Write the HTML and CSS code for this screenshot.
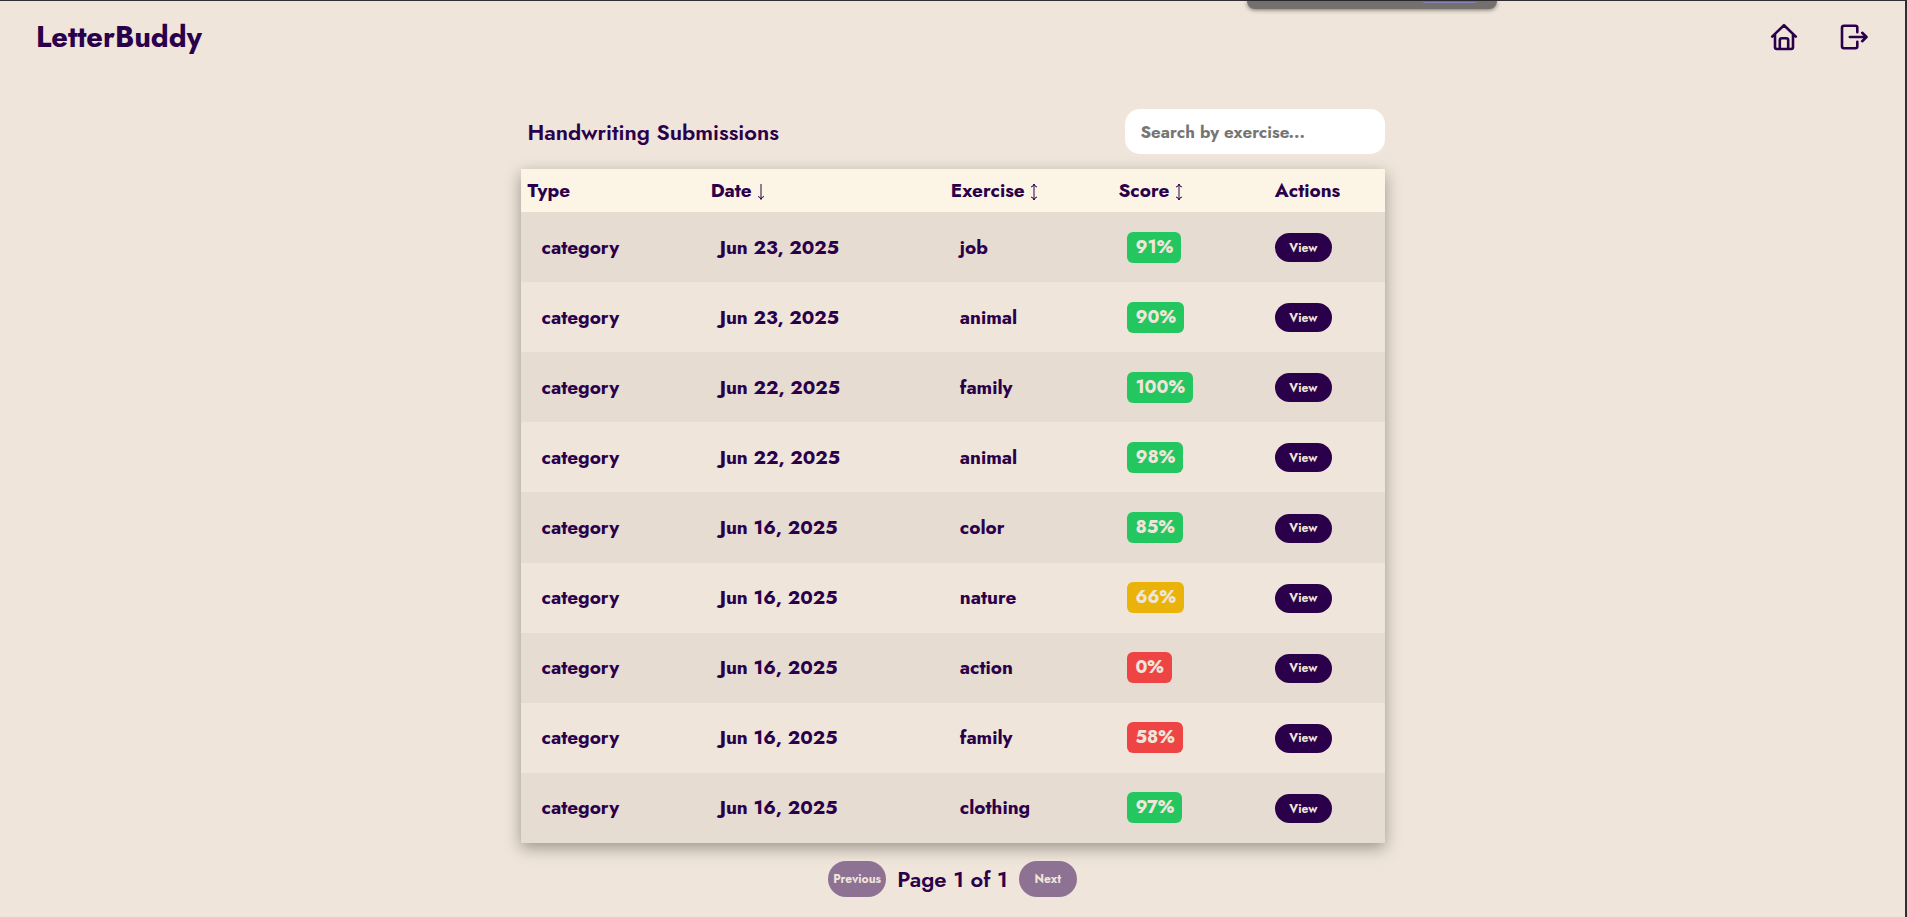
FILE: index.html
```html
<!DOCTYPE html>
<html lang="en">
<head>
<meta charset="utf-8">
<title>LetterBuddy</title>
<link rel="stylesheet" href="styles.css">
</head>
<body>
<div class="overlay-bar"><span class="overlay-pill"></span></div>
<header class="topbar">
  <a class="brand" href="#">LetterBuddy</a>
  <nav class="nav">
    <a class="nav-link" href="#" aria-label="Home">
      <svg class="icon" viewBox="0 0 28 28"><path d="M2.2 13.6 14 2.2l11.800 11.400M5 11.500V24q0 2 2 2h14q2 0 2-2V11.500M9.800 26v-8.700q0-2 2-2h4.400q2 0 2 2V26"/></svg>
    </a>
    <a class="nav-link" href="#" aria-label="Log out">
      <svg class="icon" viewBox="0 0 28 28"><path d="M17.300 9.200V4.700q0-2-2-2H4q-2 0-2 2v18.600q0 2 2 2h11.300q2 0 2-2v-4.500M9.800 14H26.300M22.200 9.800l4.300 4.200-4.300 4.200"/></svg>
    </a>
  </nav>
</header>
<main class="panel">
  <div class="toolbar">
    <h1 class="title">Handwriting Submissions</h1>
    <input class="search" type="text" placeholder="Search by exercise..." aria-label="Search by exercise">
  </div>
  <table class="table">
    <colgroup><col class="col-type"><col class="col-date"><col class="col-exercise"><col class="col-score"><col class="col-actions"></colgroup>
    <thead><tr>
      <th>Type</th>
      <th>Date <svg class="arrow" viewBox="0 0 8 18"><path d="M4 1v15M1 13.500q2.500.5 3 3q.5-2.500 3-3"/></svg></th>
      <th>Exercise <svg class="arrow" viewBox="0 0 8 18"><path d="M4 1v16M1 4q2.500-.5 3-3q.5 2.500 3 3M1 14q2.500.5 3 3q.5-2.500 3-3"/></svg></th>
      <th>Score <svg class="arrow" viewBox="0 0 8 18"><path d="M4 1v16M1 4q2.500-.5 3-3q.5 2.500 3 3M1 14q2.500.5 3 3q.5-2.500 3-3"/></svg></th>
      <th>Actions</th>
    </tr></thead>
    <tbody>
      <tr><td class="type">category</td><td>Jun 23, 2025</td><td>job</td><td><span class="score good">91%</span></td><td class="actions"><button class="view">View</button></td></tr>
      <tr><td class="type">category</td><td>Jun 23, 2025</td><td>animal</td><td><span class="score good">90%</span></td><td class="actions"><button class="view">View</button></td></tr>
      <tr><td class="type">category</td><td>Jun 22, 2025</td><td>family</td><td><span class="score good">100%</span></td><td class="actions"><button class="view">View</button></td></tr>
      <tr><td class="type">category</td><td>Jun 22, 2025</td><td>animal</td><td><span class="score good">98%</span></td><td class="actions"><button class="view">View</button></td></tr>
      <tr><td class="type">category</td><td>Jun 16, 2025</td><td>color</td><td><span class="score good">85%</span></td><td class="actions"><button class="view">View</button></td></tr>
      <tr><td class="type">category</td><td>Jun 16, 2025</td><td>nature</td><td><span class="score fair">66%</span></td><td class="actions"><button class="view">View</button></td></tr>
      <tr><td class="type">category</td><td>Jun 16, 2025</td><td>action</td><td><span class="score poor">0%</span></td><td class="actions"><button class="view">View</button></td></tr>
      <tr><td class="type">category</td><td>Jun 16, 2025</td><td>family</td><td><span class="score poor">58%</span></td><td class="actions"><button class="view">View</button></td></tr>
      <tr><td class="type">category</td><td>Jun 16, 2025</td><td>clothing</td><td><span class="score good">97%</span></td><td class="actions"><button class="view">View</button></td></tr>
    </tbody>
  </table>
  <div class="pager">
    <button class="page-button" disabled>Previous</button>
    <span class="page-label">Page 1 of 1</span>
    <button class="page-button" disabled>Next</button>
  </div>
</main>
</body>
</html>
```
FILE: styles.css
```css
* { box-sizing: border-box; }
body {
  margin: 0;
  min-height: 100vh;
  background: #efe5da;
  border-top: 1px solid #312d33;
  border-right: 2px solid #312d33;
  color: #2b004b;
  font-family: Jost, Lato, "Open Sans", sans-serif;
  font-weight: 700;
}
button, input { font: inherit; }
.overlay-bar {
  position: absolute;
  top: 1px;
  left: 1247px;
  width: 250px;
  height: 8px;
  background: #73706d;
  border-radius: 0 0 12px 12px;
  box-shadow: 0 1px 4px rgba(0, 0, 0, .5);
}
.overlay-pill {
  position: absolute;
  top: 0;
  right: 20px;
  width: 54px;
  height: 2px;
  border-bottom: 1px solid #8880b8;
  border-radius: 0 0 6px 6px;
}
.topbar {
  display: flex;
  align-items: center;
  justify-content: space-between;
  height: 72px;
  padding: 0 37px 0 36px;
}
.brand { color: inherit; font-size: 29px; text-decoration: none; }
.nav { display: flex; gap: 42px; }
.nav-link { display: flex; color: inherit; }
.icon {
  width: 28px;
  height: 28px;
  fill: none;
  stroke: currentColor;
  stroke-width: 2.600;
  stroke-linecap: round;
  stroke-linejoin: round;
}
.panel { max-width: 864px; margin: 36px auto 0; }
.toolbar {
  display: flex;
  align-items: center;
  justify-content: space-between;
  margin-bottom: 15px;
  padding-left: 7px;
}
.title { margin: 0; font-size: 22px; font-weight: 600; line-height: 30px; }
.search {
  width: 260px;
  height: 45px;
  padding: 0 16px;
  border: 0;
  border-radius: 15px;
  background: #fff;
  color: inherit;
  font-size: 17px;
}
.search::placeholder { color: #757575; }
.table {
  width: 100%;
  height: 674px;
  table-layout: fixed;
  border-collapse: collapse;
  box-shadow: 0 5px 15px rgba(0, 0, 0, .35);
  font-size: 19px;
}
.col-type { width: 21.200%; }
.col-date { width: 27.800%; }
.col-exercise { width: 19.400%; }
.col-score { width: 18.100%; }
.col-actions { width: 13.500%; }
th {
  height: 43px;
  padding: 0 7px;
  background: #fcf5e5;
  text-align: left;
}
td { height: 70px; padding: 0 16px; }
tbody tr { background: #efe5da; }
tbody tr:nth-child(odd) { background: #e6dcd1; }
.type { padding-left: 21px; }
.actions { padding: 0 7px; }
.arrow {
  width: 8px;
  height: 18px;
  vertical-align: -4px;
  fill: none;
  stroke: currentColor;
}
.score {
  display: inline-block;
  padding: 0 8px;
  border-radius: 6px;
  color: #efe5da;
  font-size: 18px;
  line-height: 31px;
}
.good { background: #24c65f; }
.fair { background: #eab30a; }
.poor { background: #ef4444; }
.view, .page-button {
  display: inline-block;
  padding: 0;
  border: 0;
  background: #2b004b;
  color: #efe5da;
  font-size: 12px;
}
.view { width: 57px; height: 29px; border-radius: 15px; vertical-align: middle; }
.pager {
  display: flex;
  align-items: center;
  justify-content: center;
  gap: 11px;
  margin-top: 18px;
}
.page-button { width: 58px; height: 36px; border-radius: 18px; background: #8d7293; }
.page-label { font-size: 22px; font-weight: 600; }
```
